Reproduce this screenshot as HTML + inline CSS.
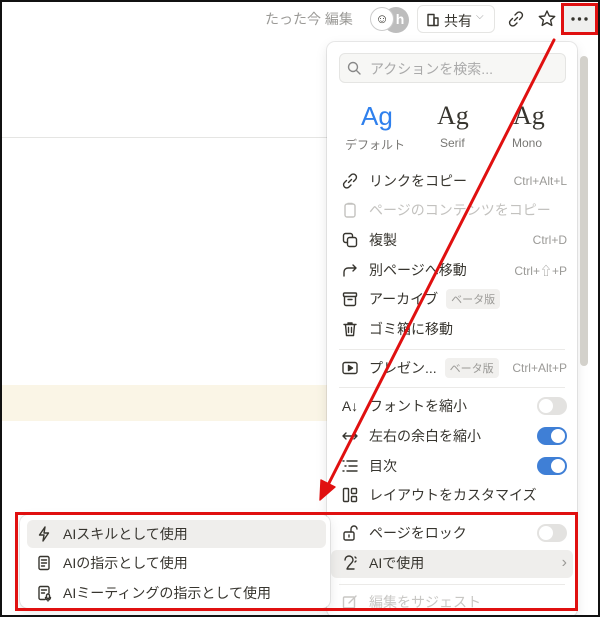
<!DOCTYPE html><html><head><meta charset="utf-8"><style>
*{box-sizing:border-box;margin:0;padding:0}
body{width:600px;height:617px;overflow:hidden;background:#fff;font-family:"Liberation Sans","Noto Sans CJK JP",sans-serif;color:#37352f;position:relative}
.frame{position:absolute;inset:0;border:2px solid #111;z-index:50;pointer-events:none}
.abs{position:absolute}
.menu{position:absolute;left:327px;top:42px;width:250px;height:575px;background:#fff;border-radius:8px;box-shadow:0 0 0 1px rgba(0,0,0,.08),0 4px 12px rgba(0,0,0,.1)}
.row{position:absolute;left:341px;width:226px;height:28px;font-size:14px;display:flex;align-items:center;white-space:nowrap}
.row .ic{width:18px;height:18px;margin-right:10px;display:flex;align-items:center;justify-content:center}
.row .sc{margin-left:auto;font-size:12px;color:#9b9a97}
.badge{background:#f1f0ee;color:#9b9a97;font-size:11px;padding:2px 5px;border-radius:4px;margin-left:8px}
.tog{margin-left:auto;width:30px;height:18px;border-radius:9px;background:#e3e2e0;position:relative}
.tog::after{content:"";position:absolute;top:2px;left:2px;width:14px;height:14px;border-radius:50%;background:#fff}
.tog.on{background:#3f7fd6}.tog.on::after{left:14px}
.div{position:absolute;left:339px;width:226px;height:1px;background:#ebeae8}
svg{stroke:#37352f;fill:none;stroke-width:1.4;stroke-linecap:round;stroke-linejoin:round}
.sub{left:35px;width:285px}
</style></head><body>
<div class="frame"></div>
<div class="abs" style="left:265px;top:9px;font-size:14px;color:#9b9a97">たった今 編集</div>
<div class="abs" style="left:383px;top:7px;width:26px;height:26px;border-radius:50%;background:#bdbdbd;color:#fff;font-size:14px;font-weight:bold;text-align:center;line-height:25px;padding-left:8px">h</div>
<div class="abs" style="left:370px;top:7px;width:24px;height:24px;border-radius:50%;background:#fff;border:1px solid #ccc;font-size:13px;text-align:center;line-height:22px">☺</div>
<div class="abs" style="left:417px;top:5px;width:78px;height:28px;border:1px solid #e5e5e3;border-radius:6px;font-size:14px;padding:5px 0 0 8px;display:flex;gap:4px"><svg width="14" height="14" viewBox="0 0 14 14" style="margin-top:2px"><rect x="2" y="1.5" width="6" height="11"/><rect x="8" y="5" width="4" height="7.5"/></svg>共有 <span style="font-size:10px;color:#999">⌵</span></div>
<svg class="abs" style="left:507px;top:10px" width="18" height="18" viewBox="0 0 18 18"><path d="M7.5 10.5 L10.5 7.5 M8 5 L10 3a3 3 0 0 1 4.5 4.5L12.5 9.5 M10 13l-2 2a3 3 0 0 1-4.5-4.5L5.5 8.5"/></svg>
<svg class="abs" style="left:537px;top:9px" width="20" height="20" viewBox="0 0 20 20"><path d="M10 2l2.3 5 5.4.5-4.1 3.6 1.2 5.3L10 13.6 5.2 16.4l1.2-5.3L2.3 7.5l5.4-.5z"/></svg>
<div class="abs" style="left:563px;top:5px;width:33px;height:28px;background:#efefee"></div>
<svg class="abs" style="left:563px;top:5px" width="33" height="28"><circle cx="10" cy="14" r="1.7" fill="#37352f" stroke="none"/><circle cx="16.5" cy="14" r="1.7" fill="#37352f" stroke="none"/><circle cx="23" cy="14" r="1.7" fill="#37352f" stroke="none"/></svg>
<div class="abs" style="left:561px;top:3px;width:37px;height:32px;border:3px solid #e01010;z-index:40"></div>
<div class="abs" style="left:0;top:137px;width:327px;height:1px;background:#e5e5e3"></div>
<div class="abs" style="left:2px;top:385px;width:325px;height:36px;background:#faf5e6"></div>
<div class="menu"></div>
<div class="abs" style="left:580px;top:56px;width:8px;height:310px;border-radius:4px;background:#d3d1cb"></div>
<div class="abs" style="left:339px;top:53px;width:227px;height:30px;background:#f7f7f5;border:1px solid #e5e5e3;border-radius:6px;font-size:14px;color:#aaa;padding:5px 0 0 30px">アクションを検索...</div>
<svg class="abs" style="left:346px;top:60px" width="16" height="16" viewBox="0 0 16 16"><circle cx="7" cy="7" r="4.5" style="stroke:#888"/><path d="M10.5 10.5L14 14" style="stroke:#888"/></svg>
<div class="abs" style="left:361px;top:101px;font-size:26px;color:#2f80ed">Ag</div>
<div class="abs" style="left:437px;top:101px;font-size:26px;font-family:'Liberation Serif',serif">Ag</div>
<div class="abs" style="left:513px;top:101px;font-size:26px;font-family:'Liberation Serif',serif">Ag</div>
<div class="abs" style="left:345px;top:136px;font-size:12px;color:#787774">デフォルト</div>
<div class="abs" style="left:440px;top:136px;font-size:12px;color:#787774">Serif</div>
<div class="abs" style="left:512px;top:136px;font-size:12px;color:#787774">Mono</div>
<div class="row" style="top:167px"><span class="ic"><svg width="18" height="18" viewBox="0 0 18 18"><path d="M7.5 10.5 L10.5 7.5 M8 5 L10 3a3 3 0 0 1 4.5 4.5L12.5 9.5 M10 13l-2 2a3 3 0 0 1-4.5-4.5L5.5 8.5"/></svg></span>リンクをコピー<span class="sc">Ctrl+Alt+L</span></div>
<div class="row" style="top:196px;color:#c3c2bf"><span class="ic"><svg width="18" height="18" viewBox="0 0 18 18" style="stroke:#c3c2bf"><rect x="4" y="3" width="10" height="13" rx="2"/><path d="M7 2.5h4"/></svg></span>ページのコンテンツをコピー</div>
<div class="row" style="top:226px"><span class="ic"><svg width="18" height="18" viewBox="0 0 18 18"><rect x="2.5" y="2.5" width="9" height="9" rx="2"/><rect x="6.5" y="6.5" width="9" height="9" rx="2" fill="#fff"/></svg></span>複製<span class="sc">Ctrl+D</span></div>
<div class="row" style="top:256px"><span class="ic"><svg width="18" height="18" viewBox="0 0 18 18"><path d="M3 15V11a4 4 0 0 1 4-4h8M12 4l3 3-3 3"/></svg></span>別ページへ移動<span class="sc">Ctrl+⇧+P</span></div>
<div class="row" style="top:285px"><span class="ic"><svg width="18" height="18" viewBox="0 0 18 18"><rect x="2.5" y="3" width="13" height="3.5" rx="1"/><path d="M3.5 6.5V14a1.5 1.5 0 0 0 1.5 1.5h8a1.5 1.5 0 0 0 1.5-1.5V6.5M7 9.5h4"/></svg></span>アーカイブ<span class="badge">ベータ版</span></div>
<div class="row" style="top:315px"><span class="ic"><svg width="18" height="18" viewBox="0 0 18 18"><path d="M3 4.5h12M7 4.5V3h4v1.5M4.5 4.5l1 11h7l1-11M7.5 7.5v5M10.5 7.5v5"/></svg></span>ゴミ箱に移動</div>
<div class="div" style="top:349px"></div>
<div class="row" style="top:354px"><span class="ic"><svg width="18" height="18" viewBox="0 0 18 18"><rect x="2" y="3.5" width="14" height="11" rx="2"/><path d="M7.5 6.5v5l4-2.5z" fill="#37352f"/></svg></span>プレゼン...<span class="badge">ベータ版</span><span class="sc">Ctrl+Alt+P</span></div>
<div class="div" style="top:387px"></div>
<div class="row" style="top:392px"><span class="ic" style="font-size:14px">A↓</span>フォントを縮小<span class="tog"></span></div>
<div class="row" style="top:422px"><span class="ic"><svg width="18" height="18" viewBox="0 0 18 18"><path d="M2 9h14M5 6L2 9l3 3M13 6l3 3-3 3"/></svg></span>左右の余白を縮小<span class="tog on"></span></div>
<div class="row" style="top:452px"><span class="ic"><svg width="18" height="18" viewBox="0 0 18 18"><path d="M2 4h1M6 4h10M4 9h1M8 9h8M2 14h1M6 14h10"/></svg></span>目次<span class="tog on"></span></div>
<div class="row" style="top:481px"><span class="ic"><svg width="18" height="18" viewBox="0 0 18 18"><rect x="2.5" y="2.5" width="5" height="13" rx="1"/><rect x="10.5" y="2.5" width="5" height="5" rx="1"/><rect x="10.5" y="10.5" width="5" height="5" rx="1"/></svg></span>レイアウトをカスタマイズ</div>
<div class="div" style="top:513px"></div>
<div class="row" style="top:519px"><span class="ic"><svg width="18" height="18" viewBox="0 0 18 18"><rect x="3" y="8" width="10" height="8" rx="1.5"/><path d="M10 8V5a3 3 0 0 1 6 0M8 11v2"/></svg></span>ページをロック<span class="tog"></span></div>
<div class="abs" style="left:331px;top:550px;width:242px;height:28px;background:#efeeec;border-radius:6px"></div>
<div class="row" style="top:549px"><span class="ic"><svg width="18" height="18" viewBox="0 0 18 18"><path d="M4 6a4 4 0 0 1 8 0c0 3-4 4-6 9h7M14 3l1 1M14 8l1-1"/></svg></span>AIで使用<span class="sc" style="font-size:16px">›</span></div>
<div class="div" style="top:584px"></div>
<div class="row" style="top:588px;color:#c8c7c4"><span class="ic"><svg width="18" height="18" viewBox="0 0 18 18" style="stroke:#c8c7c4"><rect x="2.5" y="4" width="11" height="11" rx="1"/><path d="M8 10l7-7"/></svg></span>編集をサジェスト</div>
<div class="abs" style="left:20px;top:515px;width:310px;height:93px;background:#fff;border-radius:8px;box-shadow:0 0 0 1px rgba(0,0,0,.08),0 4px 12px rgba(0,0,0,.1)"></div>
<div class="abs" style="left:27px;top:520px;width:299px;height:28px;background:#efeeec;border-radius:6px"></div>
<div class="row sub" style="top:520px"><span class="ic"><svg width="18" height="18" viewBox="0 0 18 18"><path d="M10 2L4.5 10h4.5l-1 6 5.5-8H9z"/></svg></span>AIスキルとして使用</div>
<div class="row sub" style="top:549px"><span class="ic"><svg width="18" height="18" viewBox="0 0 18 18"><rect x="4" y="2.5" width="10" height="13" rx="1.5"/><path d="M6.5 6h5M6.5 9h5M6.5 12h3"/></svg></span>AIの指示として使用</div>
<div class="row sub" style="top:579px"><span class="ic"><svg width="18" height="18" viewBox="0 0 18 18"><path d="M10 15.5H5.5A1.5 1.5 0 0 1 4 14V4a1.5 1.5 0 0 1 1.5-1.5h7A1.5 1.5 0 0 1 14 4v5M6.5 6h5M6.5 9h3"/><rect x="11.5" y="10" width="3" height="4.5" rx="1.5"/><path d="M10.5 13.5a2.5 2.5 0 0 0 5 0M13 16v1"/></svg></span>AIミーティングの指示として使用</div>
<div class="abs" style="left:15px;top:512px;width:563px;height:99px;border:3px solid #e01010;z-index:40"></div>
<svg class="abs" style="left:0;top:0;z-index:41" width="600" height="617"><line x1="554" y1="40" x2="328" y2="485" style="stroke:#e01010;stroke-width:3"/><polygon points="320,500 321,480 335,487" style="fill:#e01010;stroke:#e01010"/></svg>
</body></html>
